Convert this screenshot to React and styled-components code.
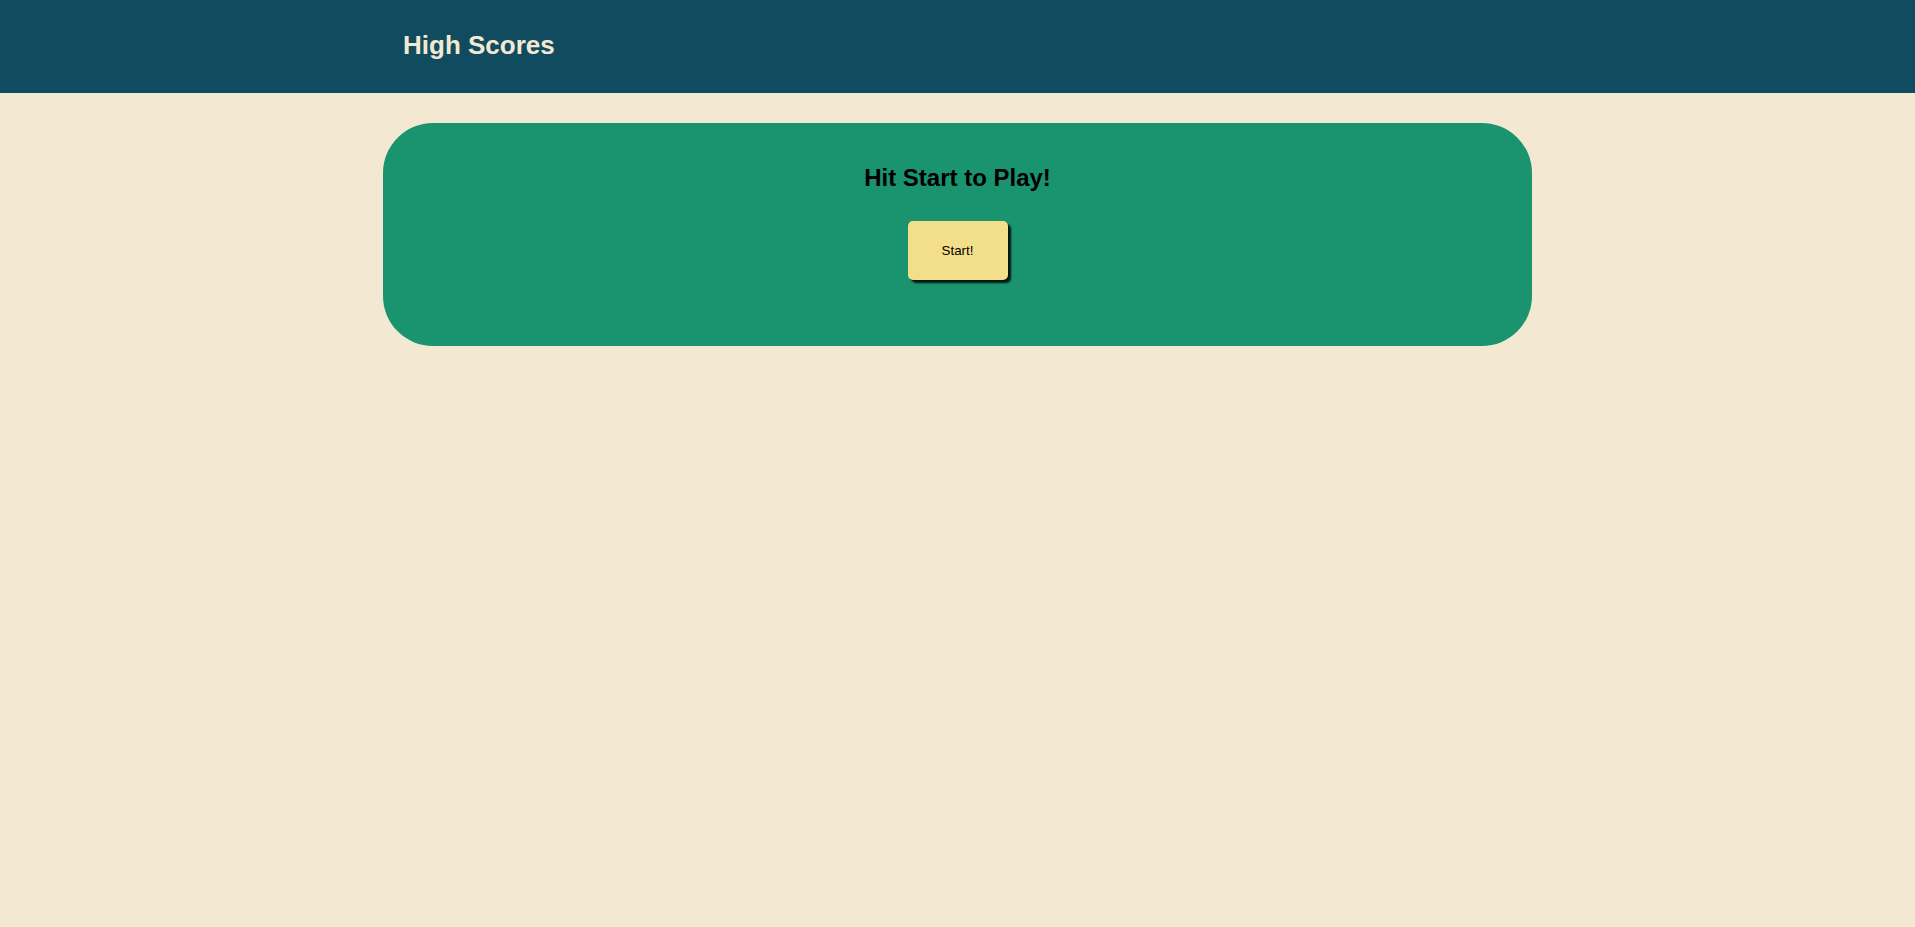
import React from "react";
import styled, { createGlobalStyle } from "styled-components";

const GlobalStyle = createGlobalStyle`
  html, body {
    margin: 0;
    padding: 0;
    background: #f3e9d2;
    font-family: "Liberation Sans", Arial, sans-serif;
    min-height: 100%;
  }
  #root { min-height: 100vh; background: #f3e9d2; }
`;

const Header = styled.header`
  background: #114b5f;
  height: 93px;
  box-sizing: border-box;
  padding-top: 30px;
`;

const HeaderInner = styled.div`
  width: 60%;
  margin: 0 auto;
  padding: 0 20px;
  box-sizing: border-box;
`;

const Title = styled.h1`
  margin: 0;
  font-size: 26px;
  font-weight: 700;
  color: #f3e9d2;
  line-height: normal;
`;

const Main = styled.main`
  padding-top: 30px;
`;

const Card = styled.section`
  width: 60%;
  height: 223px;
  margin: 0 auto;
  background: #1a936f;
  border-radius: 50px;
  padding-top: 41px;
  box-sizing: border-box;
  display: flex;
  flex-direction: column;
  align-items: center;
`;

const Prompt = styled.h2`
  margin: 0 0 29px;
  font-size: 24px;
  font-weight: 700;
  color: #000;
  line-height: normal;
`;

const StartButton = styled.button`
  width: 100px;
  height: 59px;
  background: #f3de8a;
  border: none;
  border-radius: 5px;
  box-shadow: 3px 3px 2px rgba(0, 0, 0, 0.85);
  font-family: "Liberation Sans", Arial, sans-serif;
  font-size: 13.333px;
  color: #000;
  cursor: pointer;
  padding: 0;
`;

export default function App() {
  return (
    <>
      <GlobalStyle />
      <Header>
        <HeaderInner>
          <Title>High Scores</Title>
        </HeaderInner>
      </Header>
      <Main>
        <Card>
          <Prompt>Hit Start to Play!</Prompt>
          <StartButton>Start!</StartButton>
        </Card>
      </Main>
    </>
  );
}
